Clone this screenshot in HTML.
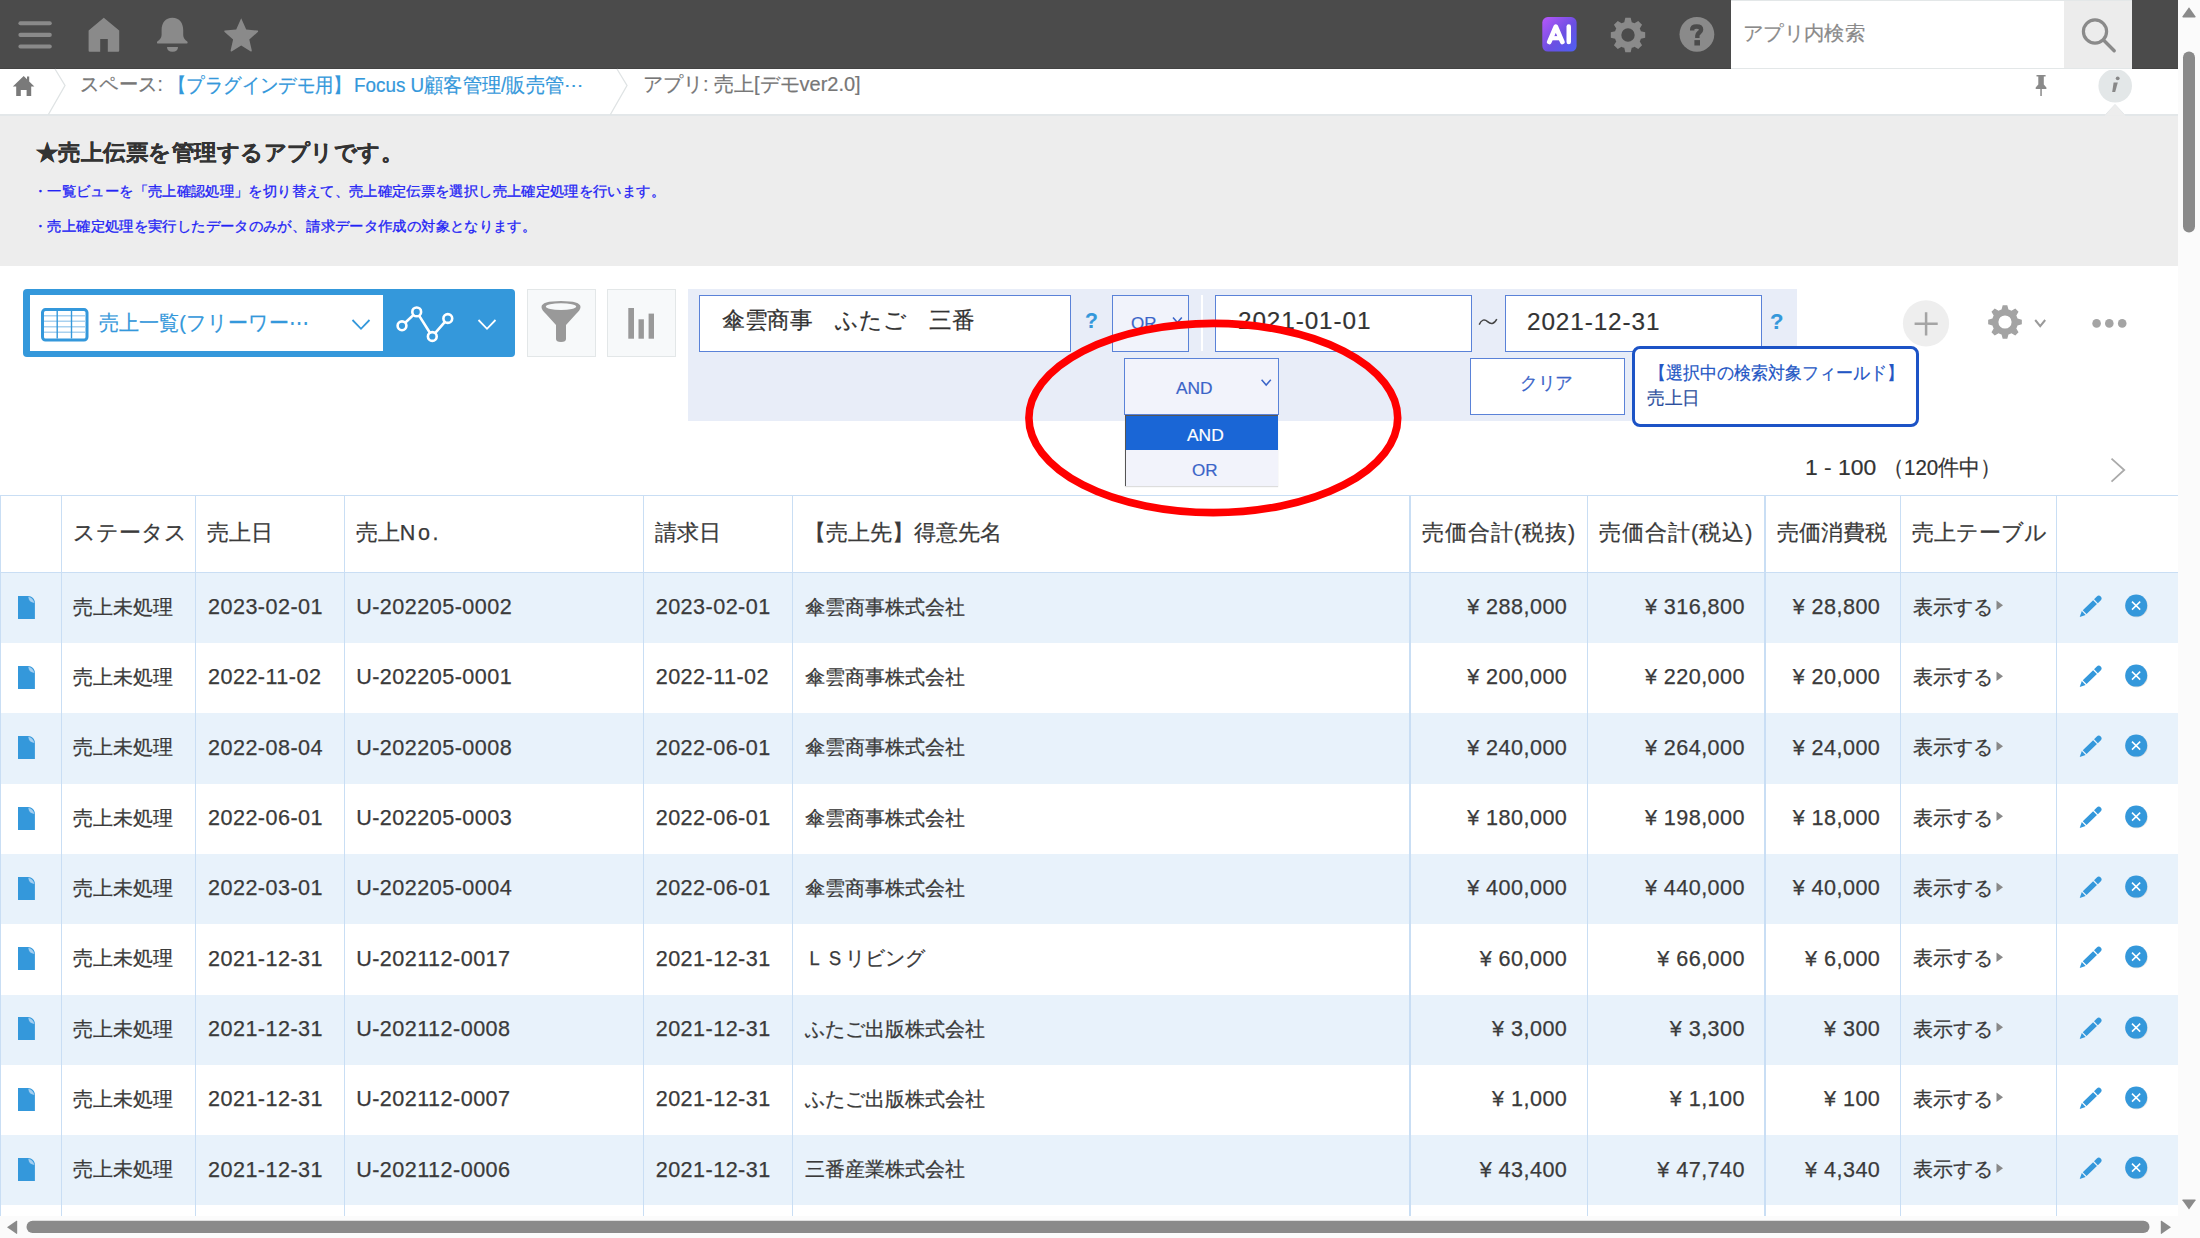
<!DOCTYPE html>
<html lang="ja">
<head>
<meta charset="utf-8">
<style>
*{box-sizing:border-box;margin:0;padding:0}
html,body{width:2200px;height:1238px;overflow:hidden;background:#fff}
body{position:relative;font-family:"Liberation Sans",sans-serif;color:#333}
.a{position:absolute}
.t{position:absolute;white-space:nowrap;line-height:1;-webkit-text-stroke:0.2px currentColor}
/* header */
#hdr{left:0;top:0;width:2178px;height:68.7px;background:#4b4b4b;border-bottom:1px solid #434343}
#sbox{left:1731px;top:0;width:333px;height:69.7px;background:#fff;border-top:1px solid #e3e7e8;border-bottom:2px solid #e3e7e8}
#sbtn{left:2064px;top:0;width:68px;height:69.7px;background:#ececec;border-top:1px solid #e3e7e8;border-bottom:2px solid #e3e7e8}
#bc{left:0;top:68.7px;width:2178px;height:47.3px;background:#fff;border-bottom:2px solid #e3e7e9}
#desc{left:0;top:116px;width:2178px;height:150px;background:#ededed}
#vsb{left:2178px;top:0;width:22px;height:1238px;background:#fbfbfb}
.cell{position:absolute;white-space:nowrap;display:flex;align-items:center;font-size:20.2px;color:#3a3a3a;line-height:1;-webkit-text-stroke:0.25px #3a3a3a}
.hd{font-size:21.6px}
.num{font-size:21.6px;letter-spacing:0.45px}
#hsb{left:0;top:1216px;width:2178px;height:22px;background:#fbfbfb}
</style>
</head>
<body>
<div id="hdr" class="a"></div>
<!-- hamburger -->
<svg class="a" style="left:0;top:0" width="300" height="68" viewBox="0 0 300 68">
 <g fill="#8a8a8a">
  <rect x="18.4" y="21.2" width="33.4" height="4.1" rx="2"/>
  <rect x="18.4" y="32.8" width="33.4" height="4.1" rx="2"/>
  <rect x="18.4" y="44.4" width="33.4" height="4.1" rx="2"/>
  <path d="M103.8 17.7 L119.2 30.4 L119.2 50.8 Q119.2 51.8 118.2 51.8 L107.8 51.8 L107.8 39 L100.2 39 L100.2 51.8 L89.6 51.8 Q88.6 51.8 88.6 50.8 L88.6 30.4 Z"/>
  <path d="M172.4 17.7 C179.5 17.7 183.2 23 183.2 30 L183.2 35 C183.2 38 185 40 187.3 41.5 C188 42.4 187.6 43.6 186.4 43.6 L158.2 43.6 C157 43.6 156.6 42.4 157.3 41.5 C159.6 40 161.6 38 161.6 35 L161.6 30 C161.6 23 165.3 17.7 172.4 17.7 Z"/>
  <path d="M167 47 L178 47 Q178 51.8 172.5 51.8 Q167 51.8 167 47 Z"/>
  <path d="M241.2 18.2 L246.2 29.6 L257.6 30.6 Q258.6 31 257.8 32 L249.3 39.6 L251.8 50.6 Q251.8 51.8 250.8 51.4 L241.2 45.6 L231.6 51.4 Q230.6 51.8 230.6 50.6 L233.1 39.6 L224.6 32 Q223.8 31 224.8 30.6 L236.2 29.6 Z"/>
 </g>
</svg>
<!-- AI -->
<svg class="a" style="left:1540px;top:15px" width="40" height="40" viewBox="0 0 40 40">
 <defs><linearGradient id="aig" x1="0" y1="0" x2="1" y2="1"><stop offset="0" stop-color="#b857fa"/><stop offset="0.55" stop-color="#6b4fe2"/><stop offset="1" stop-color="#4d60f4"/></linearGradient></defs>
 <rect x="2.3" y="2.1" width="34.3" height="34.5" rx="5.5" fill="url(#aig)"/>
 <path d="M9.3 26.9 L15.8 11.8 L22.3 26.9" fill="none" stroke="#fff" stroke-width="4.8" stroke-linecap="round" stroke-linejoin="round"/>
 <path d="M11 23.2 L20.6 23.2" stroke="#fff" stroke-width="4.2"/>
 <path d="M28.75 11.6 L28.75 27" stroke="#fff" stroke-width="4.5" stroke-linecap="round"/>
</svg>
<!-- gear -->
<svg class="a" style="left:1608px;top:14.5px" width="40" height="40" viewBox="0 0 40 40"><path fill="#8a8a8a" fill-rule="evenodd" d="M16.25 7.14 L17.31 2.81 L22.69 2.81 L23.75 7.14 A13.4 13.4 0 0 1 26.45 8.25 L30.25 5.94 L34.06 9.75 L31.75 13.55 A13.4 13.4 0 0 1 32.86 16.25 L37.19 17.31 L37.19 22.69 L32.86 23.75 A13.4 13.4 0 0 1 31.75 26.45 L34.06 30.25 L30.25 34.06 L26.45 31.75 A13.4 13.4 0 0 1 23.75 32.86 L22.69 37.19 L17.31 37.19 L16.25 32.86 A13.4 13.4 0 0 1 13.55 31.75 L9.75 34.06 L5.94 30.25 L8.25 26.45 A13.4 13.4 0 0 1 7.14 23.75 L2.81 22.69 L2.81 17.31 L7.14 16.25 A13.4 13.4 0 0 1 8.25 13.55 L5.94 9.75 L9.75 5.94 L13.55 8.25 A13.4 13.4 0 0 1 16.25 7.14 Z M26.70 20.00 A6.7 6.7 0 1 0 13.30 20.00 A6.7 6.7 0 1 0 26.70 20.00 Z"/></svg>
<!-- help -->
<svg class="a" style="left:1677px;top:15px" width="40" height="40" viewBox="0 0 40 40">
 <circle cx="19.9" cy="19.3" r="17.4" fill="#8a8a8a"/>
 <path d="M15.2 15.6 L15.2 14.6 C15.2 12.2 17.2 11.5 19.7 11.5 C22.2 11.5 24.1 12.5 24.1 14.7 C24.1 17.2 20.35 17.8 20.35 20.6 L20.35 22.9" fill="none" stroke="#4b4b4b" stroke-width="4.4"/>
 <rect x="17.4" y="25.1" width="5.6" height="5.4" fill="#4b4b4b"/>
</svg>
<div id="sbox" class="a"></div>
<div id="ph" class="t" style="left:1742.97px;top:22.77px;font-size:20px;color:#8a8a8a;transform:scaleX(1.0171);transform-origin:0 0">アプリ内検索</div>
<div id="sbtn" class="a"></div>
<svg class="a" style="left:2064px;top:0" width="68" height="68" viewBox="0 0 68 68">
 <circle cx="31" cy="31.5" r="11.6" fill="none" stroke="#8a8a8a" stroke-width="3.2"/>
 <path d="M39.5 40 L50.2 50.7" stroke="#8a8a8a" stroke-width="3.4" stroke-linecap="round"/>
</svg>
<div id="bc" class="a"></div>
<svg class="a" style="left:0;top:68px" width="700" height="47" viewBox="0 0 700 47">
 <path d="M23.7 8 L12.8 18.6 L16.2 18.6 L16.2 28 L20.8 28 L20.8 22 L26.6 22 L26.6 28 L31.2 28 L31.2 18.6 L34.4 18.6 L29.2 13.4 L29.2 8.6 L27 8.6 L27 11.2 Z" fill="#7a7a7a"/>
 <path d="M55 1 L65 17.5 L48.4 46.5" fill="none" stroke="#dfe3e4" stroke-width="1.3"/>
 <path d="M617 1 L627 17.5 L610.4 46.5" fill="none" stroke="#dfe3e4" stroke-width="1.3"/>
</svg>
<div id="bc1" class="t" style="left:79.53px;top:75.20px;font-size:19.6px;color:#777;transform:scaleX(0.9675);transform-origin:0 0">スペース:</div>
<div id="bc2" class="t" style="left:168.09px;top:75.50px;font-size:19.6px;color:#3498db;transform:scaleX(0.9192);transform-origin:0 0">【プラグインデモ用】</div>
<div id="bc3" class="t" style="left:354.04px;top:75.50px;font-size:19.6px;color:#3498db;transform:scaleX(0.9617);transform-origin:0 0">Focus U顧客管理/販売管⋯</div>
<div id="bc4" class="t" style="left:643.00px;top:74.45px;font-size:20px;color:#777;transform:scaleX(0.9991);transform-origin:0 0">アプリ: 売上[デモver2.0]</div>
<svg class="a" style="left:2025px;top:70px" width="120" height="46" viewBox="0 0 120 46">
 <path d="M11.5 5 L20.6 5 L20.6 6.6 L18.8 6.6 L18.8 14.4 L21.4 17.6 L21.4 19 L16.8 19 L16.8 26 L15.3 26 L15.3 19 L10.7 19 L10.7 17.6 L13.3 14.4 L13.3 6.6 L11.5 6.6 Z" fill="#8a8a8a"/>
 <circle cx="90.2" cy="15.8" r="16.8" fill="#e3e7e8"/>
 <circle cx="92.7" cy="8.3" r="1.9" fill="#888"/>
 <path d="M88.6 12.4 L92.8 12.4 L90.2 22 L87.2 22 Z" fill="#888"/>
</svg>
<div id="desc" class="a"></div>
<svg class="a" style="left:2100px;top:103px" width="30" height="14" viewBox="0 0 30 14"><path d="M4.6 12.6 L15 1.4 L25.4 12.6" fill="#ededed" stroke="#e6e9eb" stroke-width="1"/><rect x="5" y="12.4" width="20" height="1.6" fill="#ededed"/></svg>
<div id="title" class="t" style="left:36.49px;top:142.15px;font-size:22.4px;font-weight:bold;color:#333;transform:scaleX(1.0202);transform-origin:0 0">★売上伝票を管理するアプリです。</div>
<div id="desc1" class="t" style="left:33.33px;top:185.35px;font-size:13.9px;color:#2323f5;-webkit-text-stroke:0.3px #2323f5;transform:scaleX(1.0258);transform-origin:0 0">・一覧ビューを「売上確認処理」を切り替えて、売上確定伝票を選択し売上確定処理を行います。</div>
<div id="desc2" class="t" style="left:33.32px;top:219.65px;font-size:13.9px;color:#2323f5;-webkit-text-stroke:0.3px #2323f5;transform:scaleX(1.0269);transform-origin:0 0">・売上確定処理を実行したデータのみが、請求データ作成の対象となります。</div>

<!-- view selector -->
<div class="a" style="left:23.3px;top:289px;width:492px;height:68.4px;background:#3498db;border-radius:4px"></div>
<div class="a" style="left:29.8px;top:295.4px;width:353px;height:55.6px;background:#fff"></div>
<svg class="a" style="left:40px;top:307px" width="50" height="36" viewBox="0 0 50 36">
 <rect x="2.5" y="2.6" width="44.5" height="30.5" rx="3" fill="#fff" stroke="#3498db" stroke-width="3"/>
 <g stroke="#a9d1ef" stroke-width="1.6"><path d="M4 8.8 H45.5 M4 14.3 H45.5 M4 19.8 H45.5 M4 25.3 H45.5"/></g>
 <g stroke="#3498db" stroke-width="1.4"><path d="M17.2 4 V31.5 M31.5 4 V31.5"/></g>
</svg>
<div id="view" class="t" style="left:99.00px;top:311.55px;font-size:21px;color:#3498db;transform:scaleX(0.9541);transform-origin:0 0">売上一覧(フリーワー⋯</div>
<svg class="a" style="left:340px;top:300px" width="180" height="50" viewBox="0 0 180 50">
 <path d="M12.5 20 L21 28.8 L29.5 20" fill="none" stroke="#3498db" stroke-width="1.8"/>
 <g fill="none" stroke="#fff" stroke-width="2.6">
  <circle cx="62" cy="25.8" r="4.4"/><circle cx="76.7" cy="11.9" r="4.4"/><circle cx="92.3" cy="36.5" r="4.4"/><circle cx="107.8" cy="18.5" r="4.4"/>
  <path d="M65.2 22.8 L73.5 14.9 M79.1 15.6 L89.9 32.8 M95.1 33.1 L104.9 21.9"/>
 </g>
 <path d="M138.5 20 L147 28.8 L155.5 20" fill="none" stroke="#fff" stroke-width="1.8"/>
</svg>
<!-- filter button -->
<div class="a" style="left:527px;top:289px;width:68.5px;height:68.4px;background:#f7f9fa;border:1px solid #e3e7e8"></div>
<svg class="a" style="left:527px;top:289px" width="69" height="69" viewBox="0 0 69 69">
 <path d="M14.5 18 Q14.5 12 34 12 Q53.5 12 53.5 18 Q53.5 21 49 25 L39 36 L39 50 Q39 53 34 53 Q29 53 29 50 L29 36 L19 25 Q14.5 21 14.5 18 Z" fill="#999"/>
 <ellipse cx="34" cy="17.6" rx="15.2" ry="3.4" fill="#f7f9fa"/>
</svg>
<!-- chart button -->
<div class="a" style="left:607.4px;top:289px;width:68.4px;height:68.4px;background:#f7f9fa;border:1px solid #e3e7e8"></div>
<svg class="a" style="left:607.4px;top:289px" width="69" height="69" viewBox="0 0 69 69">
 <g fill="#999"><rect x="21.3" y="19" width="5.7" height="30.7"/><rect x="31.5" y="30.3" width="5.4" height="19.4"/><rect x="41.6" y="24.6" width="5.4" height="25.1"/></g>
</svg>
<!-- search panel -->
<div class="a" style="left:687.6px;top:289px;width:1109px;height:131.5px;background:#e8edf8"></div>
<div class="a" style="left:698.9px;top:294.5px;width:372.5px;height:57.2px;background:#fff;border:1.8px solid #5a82d8"></div>
<div id="search" class="t" style="left:721.51px;top:309.30px;font-size:22.8px;color:#333;transform:scaleX(0.9867);transform-origin:0 0">傘雲商事　ふたご　三番</div>
<div id="q1" class="t" style="left:1084.84px;top:310.35px;font-size:22px;font-weight:bold;color:#3498db;transform:scaleX(0.9583);transform-origin:0 0">?</div>
<div class="a" style="left:1111.5px;top:294.7px;width:77.5px;height:57px;background:#f1f3fb;border:1.8px solid #5a82d8"></div>
<div id="or1" class="t" style="left:1131px;top:315px;font-size:17px;color:#3b64c8">OR</div>
<svg class="a" style="left:1170px;top:314px" width="16" height="12" viewBox="0 0 16 12"><path d="M3 3.5 L7.4 8.5 L11.8 3.5" fill="none" stroke="#3b64c8" stroke-width="1.5"/></svg>
<div class="a" style="left:1200.5px;top:295px;width:2.5px;height:56px;background:#fff"></div>
<div class="a" style="left:1214.5px;top:294.5px;width:257.5px;height:57.2px;background:#fff;border:1.8px solid #5a82d8"></div>
<div id="date1" class="t" style="left:1238.00px;top:309.35px;font-size:24.5px;letter-spacing:0.9px;color:#333;transform:scaleX(0.9924);transform-origin:0 0">2021-01-01</div>
<svg class="a" style="left:1476px;top:315px" width="24" height="14" viewBox="0 0 24 14"><path d="M3.2 9.6 C5.4 4.4 8.6 3.8 11.6 6.6 C14.6 9.4 18 9.6 20.8 4.2" fill="none" stroke="#444" stroke-width="1.5"/></svg>
<div class="a" style="left:1504.5px;top:294.5px;width:257.5px;height:57.2px;background:#fff;border:1.8px solid #5a82d8"></div>
<div id="date2" class="t" style="left:1527.10px;top:309.65px;font-size:24.5px;letter-spacing:0.9px;color:#333;transform:scaleX(0.9924);transform-origin:0 0">2021-12-31</div>
<div id="q2" class="t" style="left:1770.00px;top:310.90px;font-size:22px;font-weight:bold;color:#3498db;transform:scaleX(1.0000);transform-origin:0 0">?</div>
<!-- AND select -->
<div class="a" style="left:1124.3px;top:357.6px;width:155px;height:57.5px;background:#f2f3fb;border:1.8px solid #5a82d8"></div>
<div id="and1" class="t" style="left:1176.00px;top:380.30px;font-size:17px;color:#3b64c8;transform:scaleX(1.0194);transform-origin:0 0">AND</div>
<svg class="a" style="left:1258px;top:376px" width="16" height="12" viewBox="0 0 16 12"><path d="M3.6 3.8 L8.2 9 L12.8 3.8" fill="none" stroke="#3b64c8" stroke-width="1.5"/></svg>
<div class="a" style="left:1124.8px;top:415px;width:152.8px;height:70.7px;background:#f2f3fb;border-left:1.8px solid #555;border-top:1px solid #555;box-shadow:0 1px 1px #ddd"></div>
<div class="a" style="left:1126.4px;top:415.8px;width:151.2px;height:34.4px;background:#1a66d6"></div>
<div id="and2" class="t" style="left:1186.60px;top:426.80px;font-size:17px;color:#fff;transform:scaleX(1.0222);transform-origin:0 0">AND</div>
<div id="or2" class="t" style="left:1192.00px;top:461.50px;font-size:17px;color:#3b64c8;transform:scaleX(1.0000);transform-origin:0 0">OR</div>
<!-- clear -->
<div class="a" style="left:1470px;top:358px;width:154.7px;height:56.6px;background:#fff;border:1.8px solid #5a82d8"></div>
<div id="clear" class="t" style="left:1520.04px;top:374.00px;font-size:18px;color:#3b64c8;transform:scaleX(0.9804);transform-origin:0 0">クリア</div>
<!-- tooltip -->
<div class="a" style="left:1632.4px;top:346.2px;width:286.3px;height:80.4px;background:#fff;border:3px solid #1c53c6;border-radius:8px"></div>
<div id="tip1" class="t" style="left:1648.59px;top:364.50px;font-size:17.5px;color:#2356c4;transform:scaleX(0.9436);transform-origin:0 0">【選択中の検索対象フィールド】</div>
<div id="tip2" class="t" style="left:1646.60px;top:390.30px;font-size:17.5px;color:#2d4f9e;transform:scaleX(0.9824);transform-origin:0 0">売上日</div>
<!-- right tools -->
<svg class="a" style="left:1880px;top:290px" width="260" height="70" viewBox="0 0 260 70">
 <circle cx="46" cy="33.3" r="23.1" fill="#eeeeee"/>
 <path d="M34.6 33.8 H57.7 M46.1 22.3 V45.6" stroke="#a4a4a4" stroke-width="2.5"/>
 <path d="M155.2 30 L160.2 36.2 L165.2 30" fill="none" stroke="#9a9a9a" stroke-width="2"/>
 <circle cx="216.6" cy="33.4" r="4.3" fill="#a4a4a4"/><circle cx="229.3" cy="33.4" r="4.3" fill="#a4a4a4"/><circle cx="242.2" cy="33.4" r="4.3" fill="#a4a4a4"/>
</svg>
<svg class="a" style="left:1985px;top:302px" width="40" height="40" viewBox="0 0 40 40"><path fill="#a3a3a3" fill-rule="evenodd" d="M16.54 7.47 L17.71 3.16 L22.29 3.16 L23.46 7.47 A13 13 0 0 1 26.42 8.69 L30.29 6.47 L33.53 9.71 L31.31 13.58 A13 13 0 0 1 32.53 16.54 L36.84 17.71 L36.84 22.29 L32.53 23.46 A13 13 0 0 1 31.31 26.42 L33.53 30.29 L30.29 33.53 L26.42 31.31 A13 13 0 0 1 23.46 32.53 L22.29 36.84 L17.71 36.84 L16.54 32.53 A13 13 0 0 1 13.58 31.31 L9.71 33.53 L6.47 30.29 L8.69 26.42 A13 13 0 0 1 7.47 23.46 L3.16 22.29 L3.16 17.71 L7.47 16.54 A13 13 0 0 1 8.69 13.58 L6.47 9.71 L9.71 6.47 L13.58 8.69 A13 13 0 0 1 16.54 7.47 Z M26.60 20.00 A6.6 6.6 0 1 0 13.40 20.00 A6.6 6.6 0 1 0 26.60 20.00 Z"/></svg>
<div id="pag" class="t" style="left:1804.69px;top:458.40px;font-size:21.5px;color:#333;transform:scaleX(1.0629);transform-origin:0 0">1 - 100</div>
<div id="pag2" class="t" style="left:1883.04px;top:458.40px;font-size:21.5px;color:#333;transform:scaleX(0.9542);transform-origin:0 0">（120件中）</div>
<svg class="a" style="left:2105px;top:455px" width="26" height="30" viewBox="0 0 26 30"><path d="M6.5 3.6 L19.2 15 L6.5 26.6" fill="none" stroke="#aaa" stroke-width="1.8"/></svg>
<!--TABLE-->
<div class="a" style="left:0;top:572.70px;width:2178px;height:70.31px;background:#e8f2fb"></div>
<div class="a" style="left:0;top:713.32px;width:2178px;height:70.31px;background:#e8f2fb"></div>
<div class="a" style="left:0;top:853.94px;width:2178px;height:70.31px;background:#e8f2fb"></div>
<div class="a" style="left:0;top:994.56px;width:2178px;height:70.31px;background:#e8f2fb"></div>
<div class="a" style="left:0;top:1135.18px;width:2178px;height:70.31px;background:#e8f2fb"></div>
<div class="a" style="left:0;top:495.00px;width:2178px;height:1.3px;background:#c9def4"></div>
<div class="a" style="left:0;top:572.20px;width:2178px;height:1.3px;background:#c9def4"></div>
<div class="a" style="left:-0.10px;top:495.50px;width:1.3px;height:720.50px;background:#c9def4"></div>
<div class="a" style="left:60.70px;top:495.50px;width:1.3px;height:720.50px;background:#c9def4"></div>
<div class="a" style="left:194.90px;top:495.50px;width:1.3px;height:720.50px;background:#c9def4"></div>
<div class="a" style="left:343.60px;top:495.50px;width:1.3px;height:720.50px;background:#c9def4"></div>
<div class="a" style="left:642.60px;top:495.50px;width:1.3px;height:720.50px;background:#c9def4"></div>
<div class="a" style="left:791.90px;top:495.50px;width:1.3px;height:720.50px;background:#c9def4"></div>
<div class="a" style="left:1409.40px;top:495.50px;width:1.3px;height:720.50px;background:#c9def4"></div>
<div class="a" style="left:1586.70px;top:495.50px;width:1.3px;height:720.50px;background:#c9def4"></div>
<div class="a" style="left:1764.40px;top:495.50px;width:1.3px;height:720.50px;background:#c9def4"></div>
<div class="a" style="left:1899.70px;top:495.50px;width:1.3px;height:720.50px;background:#c9def4"></div>
<div class="a" style="left:2055.60px;top:495.50px;width:1.3px;height:720.50px;background:#c9def4"></div>
<div class="cell hd" style="left:72.80px;top:494.70px;height:77.20px;">ステータス</div>
<div class="cell hd" style="left:207.00px;top:494.70px;height:77.20px;">売上日</div>
<div class="cell hd" style="left:355.70px;top:494.70px;height:77.20px;">売上<span style="letter-spacing:2.6px">No.</span></div>
<div class="cell hd" style="left:654.70px;top:494.70px;height:77.20px;">請求日</div>
<div class="cell hd" style="left:804.00px;top:494.70px;height:77.20px;">【売上先】得意先名</div>
<div class="cell hd" style="left:1421.50px;top:494.70px;height:77.20px;letter-spacing:1.05px;">売価合計(税抜)</div>
<div class="cell hd" style="left:1598.80px;top:494.70px;height:77.20px;letter-spacing:1.05px;">売価合計(税込)</div>
<div class="cell hd" style="left:1776.50px;top:494.70px;height:77.20px;">売価消費税</div>
<div class="cell hd" style="left:1911.80px;top:494.70px;height:77.20px;">売上テーブル</div>
<svg class="a" style="left:18.4px;top:595.60px" width="17" height="23" viewBox="0 0 17 23"><path d="M0 0 H10 C14 0 16.9 3 16.9 7 V22.9 H0 Z" fill="#3498db"/><path d="M10.3 0.8 C10.6 4.6 12.6 6.6 16.4 7 C15.4 3.4 13.4 1.4 10.3 0.8 Z" fill="#a6cff0"/></svg>
<div class="cell" style="left:72.80px;top:571.70px;height:70.31px">売上未処理</div>
<div class="cell num" style="left:208.00px;top:571.70px;height:70.31px">2023-02-01</div>
<div class="cell num" style="left:356.20px;top:571.70px;height:70.31px">U-202205-0002</div>
<div class="cell num" style="left:655.70px;top:571.70px;height:70.31px">2023-02-01</div>
<div class="cell" style="left:805.00px;top:571.70px;height:70.31px">傘雲商事株式会社</div>
<div class="cell num" style="right:632.70px;top:571.70px;height:70.31px">¥ 288,000</div>
<div class="cell num" style="right:455.00px;top:571.70px;height:70.31px">¥ 316,800</div>
<div class="cell num" style="right:319.70px;top:571.70px;height:70.31px">¥ 28,800</div>
<div class="cell" style="left:1912.60px;top:571.70px;height:70.31px">表示する</div>
<svg class="a" style="left:1996px;top:600.30px" width="8" height="11" viewBox="0 0 8 11"><path d="M0.5 0.5 L7 5.2 L0.5 10 Z" fill="#888"/></svg>
<svg class="a" style="left:2078px;top:593.70px" width="26" height="25" viewBox="0 0 26 25"><path d="M1.70 22.90 L7.64 20.99 L3.82 17.03 Z M8.57 20.09 L18.94 10.09 L15.12 6.13 L4.76 16.13 Z M19.87 9.18 L22.64 6.51 A2.75 2.75 0 0 0 18.82 2.55 L16.05 5.23 Z" fill="#3498db"/></svg>
<svg class="a" style="left:2122px;top:591.70px" width="28" height="28" viewBox="0 0 28 28"><circle cx="14.6" cy="14.2" r="11.2" fill="#b0b0b0" opacity="0.35"/><circle cx="14.2" cy="13.6" r="11" fill="#3498db"/><path d="M10 9.6 L18.2 17.6 M18.2 9.6 L10 17.6" stroke="#fff" stroke-width="1.5"/></svg>
<svg class="a" style="left:18.4px;top:665.91px" width="17" height="23" viewBox="0 0 17 23"><path d="M0 0 H10 C14 0 16.9 3 16.9 7 V22.9 H0 Z" fill="#3498db"/><path d="M10.3 0.8 C10.6 4.6 12.6 6.6 16.4 7 C15.4 3.4 13.4 1.4 10.3 0.8 Z" fill="#a6cff0"/></svg>
<div class="cell" style="left:72.80px;top:642.01px;height:70.31px">売上未処理</div>
<div class="cell num" style="left:208.00px;top:642.01px;height:70.31px">2022-11-02</div>
<div class="cell num" style="left:356.20px;top:642.01px;height:70.31px">U-202205-0001</div>
<div class="cell num" style="left:655.70px;top:642.01px;height:70.31px">2022-11-02</div>
<div class="cell" style="left:805.00px;top:642.01px;height:70.31px">傘雲商事株式会社</div>
<div class="cell num" style="right:632.70px;top:642.01px;height:70.31px">¥ 200,000</div>
<div class="cell num" style="right:455.00px;top:642.01px;height:70.31px">¥ 220,000</div>
<div class="cell num" style="right:319.70px;top:642.01px;height:70.31px">¥ 20,000</div>
<div class="cell" style="left:1912.60px;top:642.01px;height:70.31px">表示する</div>
<svg class="a" style="left:1996px;top:670.61px" width="8" height="11" viewBox="0 0 8 11"><path d="M0.5 0.5 L7 5.2 L0.5 10 Z" fill="#888"/></svg>
<svg class="a" style="left:2078px;top:664.01px" width="26" height="25" viewBox="0 0 26 25"><path d="M1.70 22.90 L7.64 20.99 L3.82 17.03 Z M8.57 20.09 L18.94 10.09 L15.12 6.13 L4.76 16.13 Z M19.87 9.18 L22.64 6.51 A2.75 2.75 0 0 0 18.82 2.55 L16.05 5.23 Z" fill="#3498db"/></svg>
<svg class="a" style="left:2122px;top:662.01px" width="28" height="28" viewBox="0 0 28 28"><circle cx="14.6" cy="14.2" r="11.2" fill="#b0b0b0" opacity="0.35"/><circle cx="14.2" cy="13.6" r="11" fill="#3498db"/><path d="M10 9.6 L18.2 17.6 M18.2 9.6 L10 17.6" stroke="#fff" stroke-width="1.5"/></svg>
<svg class="a" style="left:18.4px;top:736.22px" width="17" height="23" viewBox="0 0 17 23"><path d="M0 0 H10 C14 0 16.9 3 16.9 7 V22.9 H0 Z" fill="#3498db"/><path d="M10.3 0.8 C10.6 4.6 12.6 6.6 16.4 7 C15.4 3.4 13.4 1.4 10.3 0.8 Z" fill="#a6cff0"/></svg>
<div class="cell" style="left:72.80px;top:712.32px;height:70.31px">売上未処理</div>
<div class="cell num" style="left:208.00px;top:712.32px;height:70.31px">2022-08-04</div>
<div class="cell num" style="left:356.20px;top:712.32px;height:70.31px">U-202205-0008</div>
<div class="cell num" style="left:655.70px;top:712.32px;height:70.31px">2022-06-01</div>
<div class="cell" style="left:805.00px;top:712.32px;height:70.31px">傘雲商事株式会社</div>
<div class="cell num" style="right:632.70px;top:712.32px;height:70.31px">¥ 240,000</div>
<div class="cell num" style="right:455.00px;top:712.32px;height:70.31px">¥ 264,000</div>
<div class="cell num" style="right:319.70px;top:712.32px;height:70.31px">¥ 24,000</div>
<div class="cell" style="left:1912.60px;top:712.32px;height:70.31px">表示する</div>
<svg class="a" style="left:1996px;top:740.92px" width="8" height="11" viewBox="0 0 8 11"><path d="M0.5 0.5 L7 5.2 L0.5 10 Z" fill="#888"/></svg>
<svg class="a" style="left:2078px;top:734.32px" width="26" height="25" viewBox="0 0 26 25"><path d="M1.70 22.90 L7.64 20.99 L3.82 17.03 Z M8.57 20.09 L18.94 10.09 L15.12 6.13 L4.76 16.13 Z M19.87 9.18 L22.64 6.51 A2.75 2.75 0 0 0 18.82 2.55 L16.05 5.23 Z" fill="#3498db"/></svg>
<svg class="a" style="left:2122px;top:732.32px" width="28" height="28" viewBox="0 0 28 28"><circle cx="14.6" cy="14.2" r="11.2" fill="#b0b0b0" opacity="0.35"/><circle cx="14.2" cy="13.6" r="11" fill="#3498db"/><path d="M10 9.6 L18.2 17.6 M18.2 9.6 L10 17.6" stroke="#fff" stroke-width="1.5"/></svg>
<svg class="a" style="left:18.4px;top:806.53px" width="17" height="23" viewBox="0 0 17 23"><path d="M0 0 H10 C14 0 16.9 3 16.9 7 V22.9 H0 Z" fill="#3498db"/><path d="M10.3 0.8 C10.6 4.6 12.6 6.6 16.4 7 C15.4 3.4 13.4 1.4 10.3 0.8 Z" fill="#a6cff0"/></svg>
<div class="cell" style="left:72.80px;top:782.63px;height:70.31px">売上未処理</div>
<div class="cell num" style="left:208.00px;top:782.63px;height:70.31px">2022-06-01</div>
<div class="cell num" style="left:356.20px;top:782.63px;height:70.31px">U-202205-0003</div>
<div class="cell num" style="left:655.70px;top:782.63px;height:70.31px">2022-06-01</div>
<div class="cell" style="left:805.00px;top:782.63px;height:70.31px">傘雲商事株式会社</div>
<div class="cell num" style="right:632.70px;top:782.63px;height:70.31px">¥ 180,000</div>
<div class="cell num" style="right:455.00px;top:782.63px;height:70.31px">¥ 198,000</div>
<div class="cell num" style="right:319.70px;top:782.63px;height:70.31px">¥ 18,000</div>
<div class="cell" style="left:1912.60px;top:782.63px;height:70.31px">表示する</div>
<svg class="a" style="left:1996px;top:811.23px" width="8" height="11" viewBox="0 0 8 11"><path d="M0.5 0.5 L7 5.2 L0.5 10 Z" fill="#888"/></svg>
<svg class="a" style="left:2078px;top:804.63px" width="26" height="25" viewBox="0 0 26 25"><path d="M1.70 22.90 L7.64 20.99 L3.82 17.03 Z M8.57 20.09 L18.94 10.09 L15.12 6.13 L4.76 16.13 Z M19.87 9.18 L22.64 6.51 A2.75 2.75 0 0 0 18.82 2.55 L16.05 5.23 Z" fill="#3498db"/></svg>
<svg class="a" style="left:2122px;top:802.63px" width="28" height="28" viewBox="0 0 28 28"><circle cx="14.6" cy="14.2" r="11.2" fill="#b0b0b0" opacity="0.35"/><circle cx="14.2" cy="13.6" r="11" fill="#3498db"/><path d="M10 9.6 L18.2 17.6 M18.2 9.6 L10 17.6" stroke="#fff" stroke-width="1.5"/></svg>
<svg class="a" style="left:18.4px;top:876.84px" width="17" height="23" viewBox="0 0 17 23"><path d="M0 0 H10 C14 0 16.9 3 16.9 7 V22.9 H0 Z" fill="#3498db"/><path d="M10.3 0.8 C10.6 4.6 12.6 6.6 16.4 7 C15.4 3.4 13.4 1.4 10.3 0.8 Z" fill="#a6cff0"/></svg>
<div class="cell" style="left:72.80px;top:852.94px;height:70.31px">売上未処理</div>
<div class="cell num" style="left:208.00px;top:852.94px;height:70.31px">2022-03-01</div>
<div class="cell num" style="left:356.20px;top:852.94px;height:70.31px">U-202205-0004</div>
<div class="cell num" style="left:655.70px;top:852.94px;height:70.31px">2022-06-01</div>
<div class="cell" style="left:805.00px;top:852.94px;height:70.31px">傘雲商事株式会社</div>
<div class="cell num" style="right:632.70px;top:852.94px;height:70.31px">¥ 400,000</div>
<div class="cell num" style="right:455.00px;top:852.94px;height:70.31px">¥ 440,000</div>
<div class="cell num" style="right:319.70px;top:852.94px;height:70.31px">¥ 40,000</div>
<div class="cell" style="left:1912.60px;top:852.94px;height:70.31px">表示する</div>
<svg class="a" style="left:1996px;top:881.54px" width="8" height="11" viewBox="0 0 8 11"><path d="M0.5 0.5 L7 5.2 L0.5 10 Z" fill="#888"/></svg>
<svg class="a" style="left:2078px;top:874.94px" width="26" height="25" viewBox="0 0 26 25"><path d="M1.70 22.90 L7.64 20.99 L3.82 17.03 Z M8.57 20.09 L18.94 10.09 L15.12 6.13 L4.76 16.13 Z M19.87 9.18 L22.64 6.51 A2.75 2.75 0 0 0 18.82 2.55 L16.05 5.23 Z" fill="#3498db"/></svg>
<svg class="a" style="left:2122px;top:872.94px" width="28" height="28" viewBox="0 0 28 28"><circle cx="14.6" cy="14.2" r="11.2" fill="#b0b0b0" opacity="0.35"/><circle cx="14.2" cy="13.6" r="11" fill="#3498db"/><path d="M10 9.6 L18.2 17.6 M18.2 9.6 L10 17.6" stroke="#fff" stroke-width="1.5"/></svg>
<svg class="a" style="left:18.4px;top:947.15px" width="17" height="23" viewBox="0 0 17 23"><path d="M0 0 H10 C14 0 16.9 3 16.9 7 V22.9 H0 Z" fill="#3498db"/><path d="M10.3 0.8 C10.6 4.6 12.6 6.6 16.4 7 C15.4 3.4 13.4 1.4 10.3 0.8 Z" fill="#a6cff0"/></svg>
<div class="cell" style="left:72.80px;top:923.25px;height:70.31px">売上未処理</div>
<div class="cell num" style="left:208.00px;top:923.25px;height:70.31px">2021-12-31</div>
<div class="cell num" style="left:356.20px;top:923.25px;height:70.31px">U-202112-0017</div>
<div class="cell num" style="left:655.70px;top:923.25px;height:70.31px">2021-12-31</div>
<div class="cell" style="left:805.00px;top:923.25px;height:70.31px">ＬＳリビング</div>
<div class="cell num" style="right:632.70px;top:923.25px;height:70.31px">¥ 60,000</div>
<div class="cell num" style="right:455.00px;top:923.25px;height:70.31px">¥ 66,000</div>
<div class="cell num" style="right:319.70px;top:923.25px;height:70.31px">¥ 6,000</div>
<div class="cell" style="left:1912.60px;top:923.25px;height:70.31px">表示する</div>
<svg class="a" style="left:1996px;top:951.85px" width="8" height="11" viewBox="0 0 8 11"><path d="M0.5 0.5 L7 5.2 L0.5 10 Z" fill="#888"/></svg>
<svg class="a" style="left:2078px;top:945.25px" width="26" height="25" viewBox="0 0 26 25"><path d="M1.70 22.90 L7.64 20.99 L3.82 17.03 Z M8.57 20.09 L18.94 10.09 L15.12 6.13 L4.76 16.13 Z M19.87 9.18 L22.64 6.51 A2.75 2.75 0 0 0 18.82 2.55 L16.05 5.23 Z" fill="#3498db"/></svg>
<svg class="a" style="left:2122px;top:943.25px" width="28" height="28" viewBox="0 0 28 28"><circle cx="14.6" cy="14.2" r="11.2" fill="#b0b0b0" opacity="0.35"/><circle cx="14.2" cy="13.6" r="11" fill="#3498db"/><path d="M10 9.6 L18.2 17.6 M18.2 9.6 L10 17.6" stroke="#fff" stroke-width="1.5"/></svg>
<svg class="a" style="left:18.4px;top:1017.46px" width="17" height="23" viewBox="0 0 17 23"><path d="M0 0 H10 C14 0 16.9 3 16.9 7 V22.9 H0 Z" fill="#3498db"/><path d="M10.3 0.8 C10.6 4.6 12.6 6.6 16.4 7 C15.4 3.4 13.4 1.4 10.3 0.8 Z" fill="#a6cff0"/></svg>
<div class="cell" style="left:72.80px;top:993.56px;height:70.31px">売上未処理</div>
<div class="cell num" style="left:208.00px;top:993.56px;height:70.31px">2021-12-31</div>
<div class="cell num" style="left:356.20px;top:993.56px;height:70.31px">U-202112-0008</div>
<div class="cell num" style="left:655.70px;top:993.56px;height:70.31px">2021-12-31</div>
<div class="cell" style="left:805.00px;top:993.56px;height:70.31px">ふたご出版株式会社</div>
<div class="cell num" style="right:632.70px;top:993.56px;height:70.31px">¥ 3,000</div>
<div class="cell num" style="right:455.00px;top:993.56px;height:70.31px">¥ 3,300</div>
<div class="cell num" style="right:319.70px;top:993.56px;height:70.31px">¥ 300</div>
<div class="cell" style="left:1912.60px;top:993.56px;height:70.31px">表示する</div>
<svg class="a" style="left:1996px;top:1022.16px" width="8" height="11" viewBox="0 0 8 11"><path d="M0.5 0.5 L7 5.2 L0.5 10 Z" fill="#888"/></svg>
<svg class="a" style="left:2078px;top:1015.56px" width="26" height="25" viewBox="0 0 26 25"><path d="M1.70 22.90 L7.64 20.99 L3.82 17.03 Z M8.57 20.09 L18.94 10.09 L15.12 6.13 L4.76 16.13 Z M19.87 9.18 L22.64 6.51 A2.75 2.75 0 0 0 18.82 2.55 L16.05 5.23 Z" fill="#3498db"/></svg>
<svg class="a" style="left:2122px;top:1013.56px" width="28" height="28" viewBox="0 0 28 28"><circle cx="14.6" cy="14.2" r="11.2" fill="#b0b0b0" opacity="0.35"/><circle cx="14.2" cy="13.6" r="11" fill="#3498db"/><path d="M10 9.6 L18.2 17.6 M18.2 9.6 L10 17.6" stroke="#fff" stroke-width="1.5"/></svg>
<svg class="a" style="left:18.4px;top:1087.77px" width="17" height="23" viewBox="0 0 17 23"><path d="M0 0 H10 C14 0 16.9 3 16.9 7 V22.9 H0 Z" fill="#3498db"/><path d="M10.3 0.8 C10.6 4.6 12.6 6.6 16.4 7 C15.4 3.4 13.4 1.4 10.3 0.8 Z" fill="#a6cff0"/></svg>
<div class="cell" style="left:72.80px;top:1063.87px;height:70.31px">売上未処理</div>
<div class="cell num" style="left:208.00px;top:1063.87px;height:70.31px">2021-12-31</div>
<div class="cell num" style="left:356.20px;top:1063.87px;height:70.31px">U-202112-0007</div>
<div class="cell num" style="left:655.70px;top:1063.87px;height:70.31px">2021-12-31</div>
<div class="cell" style="left:805.00px;top:1063.87px;height:70.31px">ふたご出版株式会社</div>
<div class="cell num" style="right:632.70px;top:1063.87px;height:70.31px">¥ 1,000</div>
<div class="cell num" style="right:455.00px;top:1063.87px;height:70.31px">¥ 1,100</div>
<div class="cell num" style="right:319.70px;top:1063.87px;height:70.31px">¥ 100</div>
<div class="cell" style="left:1912.60px;top:1063.87px;height:70.31px">表示する</div>
<svg class="a" style="left:1996px;top:1092.47px" width="8" height="11" viewBox="0 0 8 11"><path d="M0.5 0.5 L7 5.2 L0.5 10 Z" fill="#888"/></svg>
<svg class="a" style="left:2078px;top:1085.87px" width="26" height="25" viewBox="0 0 26 25"><path d="M1.70 22.90 L7.64 20.99 L3.82 17.03 Z M8.57 20.09 L18.94 10.09 L15.12 6.13 L4.76 16.13 Z M19.87 9.18 L22.64 6.51 A2.75 2.75 0 0 0 18.82 2.55 L16.05 5.23 Z" fill="#3498db"/></svg>
<svg class="a" style="left:2122px;top:1083.87px" width="28" height="28" viewBox="0 0 28 28"><circle cx="14.6" cy="14.2" r="11.2" fill="#b0b0b0" opacity="0.35"/><circle cx="14.2" cy="13.6" r="11" fill="#3498db"/><path d="M10 9.6 L18.2 17.6 M18.2 9.6 L10 17.6" stroke="#fff" stroke-width="1.5"/></svg>
<svg class="a" style="left:18.4px;top:1158.08px" width="17" height="23" viewBox="0 0 17 23"><path d="M0 0 H10 C14 0 16.9 3 16.9 7 V22.9 H0 Z" fill="#3498db"/><path d="M10.3 0.8 C10.6 4.6 12.6 6.6 16.4 7 C15.4 3.4 13.4 1.4 10.3 0.8 Z" fill="#a6cff0"/></svg>
<div class="cell" style="left:72.80px;top:1134.18px;height:70.31px">売上未処理</div>
<div class="cell num" style="left:208.00px;top:1134.18px;height:70.31px">2021-12-31</div>
<div class="cell num" style="left:356.20px;top:1134.18px;height:70.31px">U-202112-0006</div>
<div class="cell num" style="left:655.70px;top:1134.18px;height:70.31px">2021-12-31</div>
<div class="cell" style="left:805.00px;top:1134.18px;height:70.31px">三番産業株式会社</div>
<div class="cell num" style="right:632.70px;top:1134.18px;height:70.31px">¥ 43,400</div>
<div class="cell num" style="right:455.00px;top:1134.18px;height:70.31px">¥ 47,740</div>
<div class="cell num" style="right:319.70px;top:1134.18px;height:70.31px">¥ 4,340</div>
<div class="cell" style="left:1912.60px;top:1134.18px;height:70.31px">表示する</div>
<svg class="a" style="left:1996px;top:1162.78px" width="8" height="11" viewBox="0 0 8 11"><path d="M0.5 0.5 L7 5.2 L0.5 10 Z" fill="#888"/></svg>
<svg class="a" style="left:2078px;top:1156.18px" width="26" height="25" viewBox="0 0 26 25"><path d="M1.70 22.90 L7.64 20.99 L3.82 17.03 Z M8.57 20.09 L18.94 10.09 L15.12 6.13 L4.76 16.13 Z M19.87 9.18 L22.64 6.51 A2.75 2.75 0 0 0 18.82 2.55 L16.05 5.23 Z" fill="#3498db"/></svg>
<svg class="a" style="left:2122px;top:1154.18px" width="28" height="28" viewBox="0 0 28 28"><circle cx="14.6" cy="14.2" r="11.2" fill="#b0b0b0" opacity="0.35"/><circle cx="14.2" cy="13.6" r="11" fill="#3498db"/><path d="M10 9.6 L18.2 17.6 M18.2 9.6 L10 17.6" stroke="#fff" stroke-width="1.5"/></svg>
<!--/TABLE-->
<!-- red ellipse -->
<svg class="a" style="left:1000px;top:300px;pointer-events:none;z-index:10" width="430" height="240" viewBox="0 0 430 240">
 <ellipse cx="213.3" cy="118" rx="184.4" ry="94.6" fill="none" stroke="#ff0000" stroke-width="7.6"/>
</svg>
<div id="vsb" class="a"></div>
<svg class="a" style="left:2178px;top:0" width="22" height="1238" viewBox="0 0 22 1238">
 <path d="M11 7.2 L17.6 16.6 Q18 17.4 17 17.4 L5 17.4 Q4 17.4 4.4 16.6 Z" fill="#8a8a8a"/>
 <rect x="5" y="51.5" width="12" height="181" rx="6" fill="#8a8a8a"/>
 <path d="M11 1209.6 L17.6 1200.2 Q18 1199.4 17 1199.4 L5 1199.4 Q4 1199.4 4.4 1200.2 Z" fill="#8a8a8a"/>
</svg>
<div id="hsb" class="a"></div>
<svg class="a" style="left:0;top:1216px" width="2178" height="22" viewBox="0 0 2178 22">
 <path d="M7 11.3 L16.4 4.8 Q17.2 4.4 17.2 5.4 L17.2 17.2 Q17.2 18.2 16.4 17.8 Z" fill="#8a8a8a"/>
 <rect x="26.5" y="4.8" width="2123" height="12.3" rx="6.1" fill="#8a8a8a"/>
 <path d="M171 11.3 L161.6 4.8 Q160.8 4.4 160.8 5.4 L160.8 17.2 Q160.8 18.2 161.6 17.8 Z" transform="translate(2000,0)" fill="#8a8a8a"/>
</svg>
</body>
</html>
